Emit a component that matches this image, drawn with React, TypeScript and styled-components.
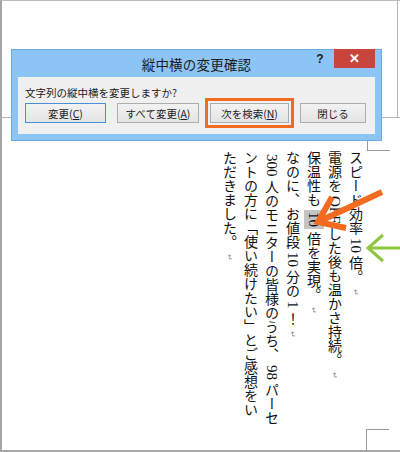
import React from 'react';
import styled, { createGlobalStyle } from 'styled-components';

const Global = createGlobalStyle`
  html, body { margin: 0; padding: 0; background: #fff; }
  body { font-family: "Noto Sans CJK JP", "Noto Sans", sans-serif; }
  * { box-sizing: border-box; }
`;

const Frame = styled.div`
  position: relative;
  width: 400px;
  height: 452px;
  overflow: hidden;
  background: #fff;
  border-left: 2px solid #a6a6a6;
  border-top: 1px solid #bdbdbd;
  border-bottom: 2px solid #a6a6a6;
`;

const TopBand = styled.div`
  height: 117px;
  border-bottom: 1px solid #b5b5b5;
  display: flex;
  justify-content: flex-end;
`;

const RightRule = styled.div`
  width: 1px;
  margin-right: 2px;
  background: #b5b5b5;
`;

const Body = styled.div`
  display: flex;
  justify-content: flex-end;
  padding-top: 33px;
  padding-right: 34px;
`;

const TextArea = styled.div`
  position: relative;
  writing-mode: vertical-rl;
  text-orientation: mixed;
  height: 278px;
  width: 147px;
  font-size: 14px;
  line-height: 21px;
  color: #111;

  &::before {
    content: "";
    position: absolute;
    left: calc(100% + 1px);
    top: -21px;
    width: 22px;
    height: 20px;
    border-left: 1px solid #9a9a9a;
    border-bottom: 1px solid #9a9a9a;
  }
  &::after {
    content: "";
    position: absolute;
    left: 100%;
    top: 100%;
    width: 22px;
    height: 30px;
    border-left: 1px solid #9a9a9a;
    border-top: 1px solid #9a9a9a;
  }
`;

const Line = styled.div`
  white-space: nowrap;
`;

const Latin = styled.span<{ $hl?: boolean }>`
  font-family: "Liberation Serif", "Times New Roman", serif;
  font-size: 15px;
  line-height: 0;
  margin-inline: 3px;
  padding-inline: ${p => (p.$hl ? '2px' : '0')};
  padding-block: ${p => (p.$hl ? '2px' : '0')};
  background: ${p => (p.$hl ? '#c4c4c4' : 'transparent')};
`;

const Mark = styled.span`
  font-size: 8px;
  line-height: 0;
  color: #8c8c8c;
  margin-inline-start: 5px;
`;

const Dialog = styled.div`
  position: absolute;
  left: 9px;
  top: 48px;
  width: 371px;
  height: 92px;
  background: #8cc4f5;
  border: 1px solid #6fabe3;
  padding: 0 6px 6px 6px;
  display: flex;
  flex-direction: column;
`;

const TitleBar = styled.div`
  height: 27px;
  display: grid;
  grid-template-columns: 1fr auto 1fr;
  align-items: center;
`;

const Title = styled.div`
  grid-column: 2;
  font-size: 13.5px;
  color: #1c1c1c;
  letter-spacing: 0.2px;
`;

const Controls = styled.div`
  grid-column: 3;
  align-self: start;
  justify-self: end;
  display: flex;
  align-items: flex-start;
  gap: 7px;
`;

const Help = styled.div`
  width: 14px;
  margin-top: 2px;
  font-family: "Liberation Sans", Arial, sans-serif;
  font-weight: bold;
  font-size: 12px;
  color: #202020;
  text-align: center;
`;

const Close = styled.div`
  width: 41px;
  height: 19px;
  margin-top: -1px;
  background: #c8443d;
  color: #fff;
  display: flex;
  align-items: center;
  justify-content: center;
  font-family: "Liberation Sans", Arial, sans-serif;
  font-weight: bold;
  font-size: 13px;
`;

const Content = styled.div`
  flex: 1;
  background: #f0f0f0;
  padding: 8px 8px 0 7px;
`;

const Label = styled.div`
  font-size: 10.5px;
  line-height: 16px;
  color: #1c1c1c;
  margin-bottom: 2px;
`;

const ButtonRow = styled.div`
  display: flex;
  gap: 11px;
`;

const Button = styled.div<{ $w: number; $primary?: boolean; $focus?: boolean }>`
  width: ${p => p.$w}px;
  height: 20px;
  border: 1px solid ${p => (p.$primary ? '#4b8fd4' : '#adadad')};
  background: linear-gradient(#f2f2f2, #e4e4e4);
  font-size: 10.5px;
  color: #1c1c1c;
  display: flex;
  align-items: center;
  justify-content: center;
  outline: ${p => (p.$focus ? '3px solid #f26b21' : 'none')};
  outline-offset: 2px;
`;

const U = styled.span`
  text-decoration: underline;
`;

const Overlay = styled.svg`
  position: absolute;
  left: -2px;
  top: -1px;
  pointer-events: none;
`;

export default function App() {
  return (
    <>
      <Global />
      <Frame>
        <TopBand>
          <RightRule />
        </TopBand>
        <Body>
          <TextArea>
            <Line>スピード効率<Latin>10</Latin>倍。<Mark>↵</Mark></Line>
            <Line>電源を<Latin>OFF</Latin>した後も温かさ持続。<Mark>↵</Mark></Line>
            <Line>保温性も<Latin $hl>10</Latin>倍を実現。<Mark>↵</Mark></Line>
            <Line>なのに、お値段<Latin>10</Latin>分の<Latin>1</Latin>！<Mark>↵</Mark></Line>
            <Line><Latin>300</Latin>人のモニターの皆様のうち、<Latin>98</Latin>パーセ</Line>
            <Line>ントの方に「使い続けたい」とご感想をい</Line>
            <Line>ただきました。<Mark>↵</Mark></Line>
          </TextArea>
        </Body>
        <Dialog>
          <TitleBar>
            <Title>縦中横の変更確認</Title>
            <Controls>
              <Help>?</Help>
              <Close>✕</Close>
            </Controls>
          </TitleBar>
          <Content>
            <Label>文字列の縦中横を変更しますか?</Label>
            <ButtonRow>
              <Button $w={81} $primary>変更(<U>C</U>)</Button>
              <Button $w={82}>すべて変更(<U>A</U>)</Button>
              <Button $w={79} $focus>次を検索(<U>N</U>)</Button>
              <Button $w={66}>閉じる</Button>
            </ButtonRow>
          </Content>
        </Dialog>
        <Overlay width="400" height="452" viewBox="0 0 400 452">
          <g stroke="#f26b21" strokeWidth="6" strokeLinecap="butt" strokeLinejoin="miter" fill="none">
            <line x1="382" y1="192" x2="322" y2="220" />
            <polyline points="332,197 318,222 346,228" />
          </g>
          <g stroke="#8dc63f" strokeWidth="3" fill="none">
            <line x1="368" y1="248" x2="402" y2="248" />
            <polyline points="383,235 368,248 383,261" />
          </g>
        </Overlay>
      </Frame>
    </>
  );
}
